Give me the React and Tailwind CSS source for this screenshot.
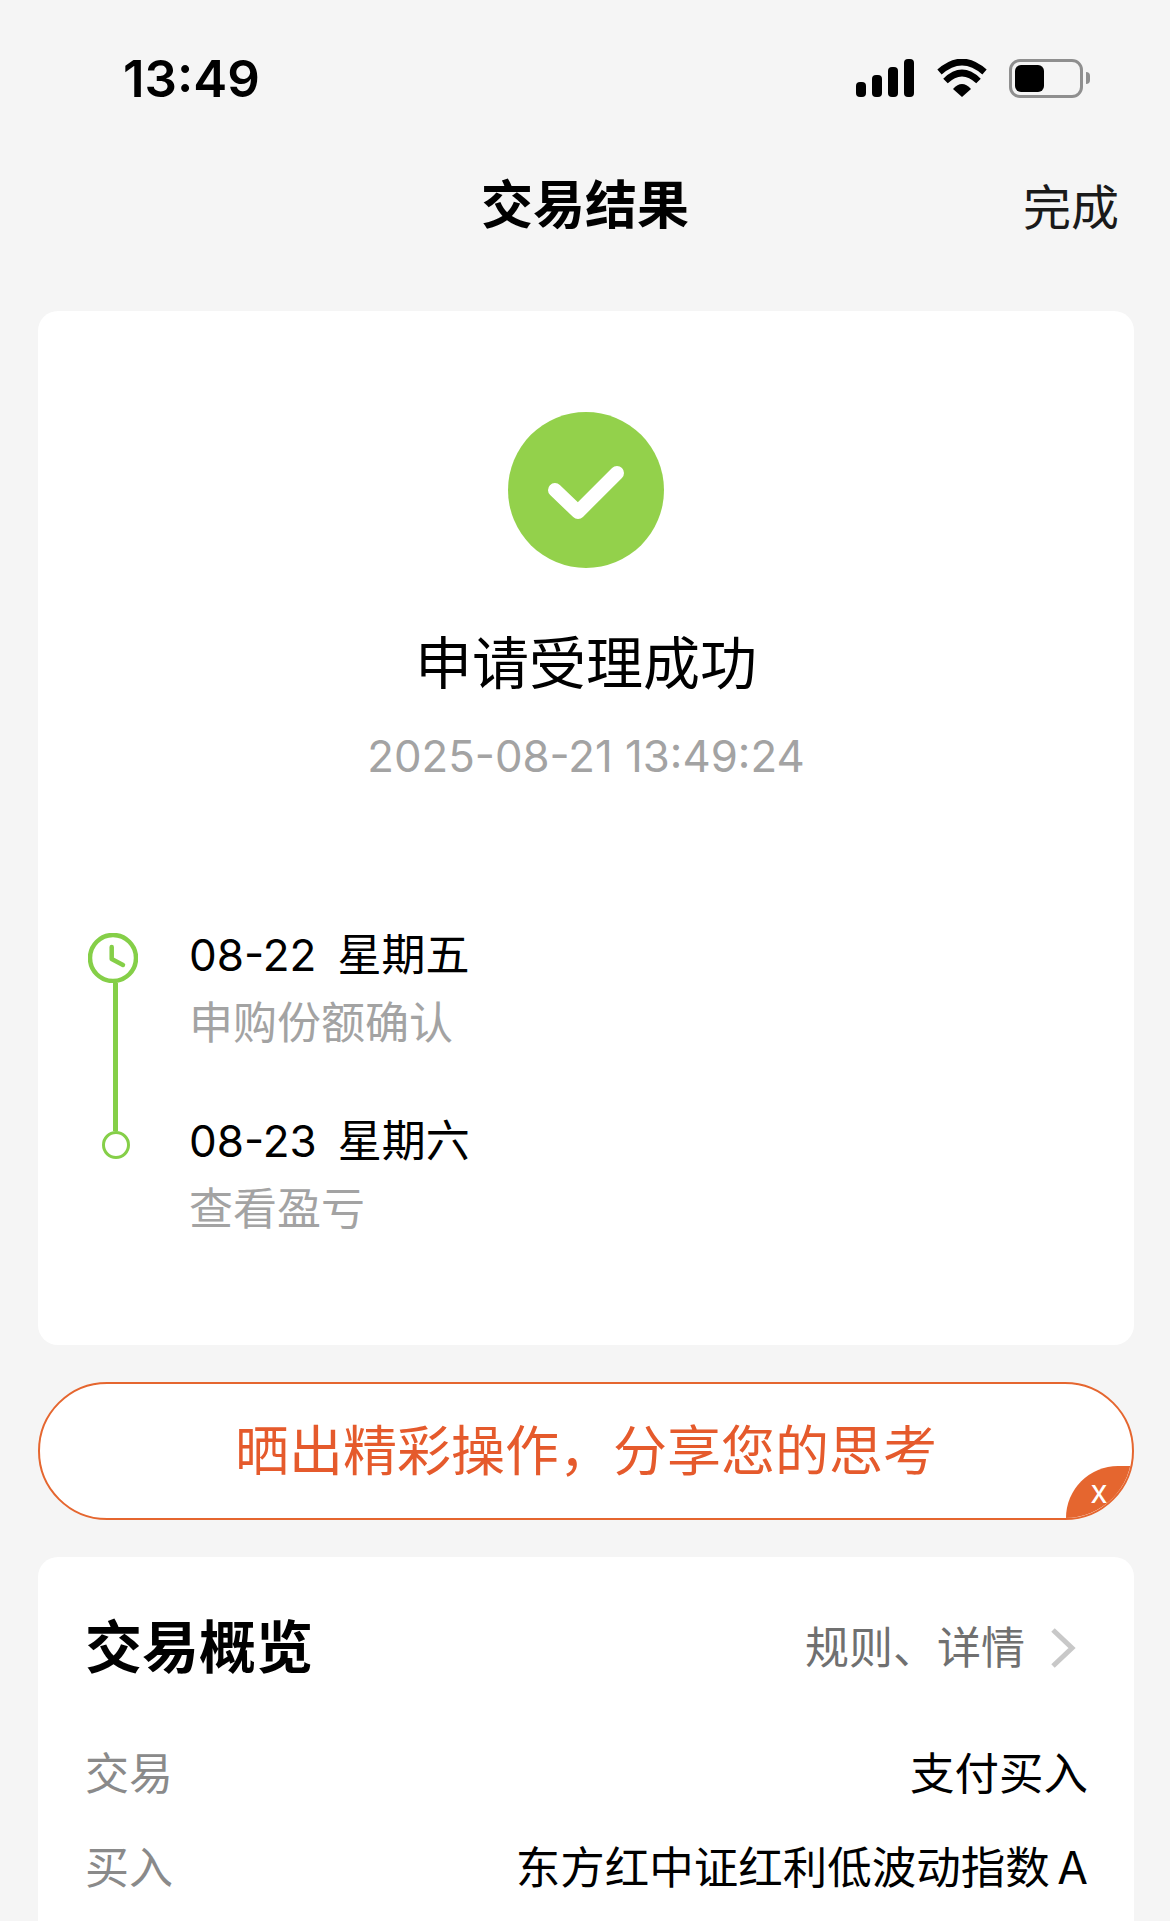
import React from "react";

const FONT = { fontFamily: '"Inter", "Noto Sans CJK SC", sans-serif' };

function StatusIcons() {
  return (
    <div className="flex items-center">
      <svg width="58" height="38" viewBox="0 0 58 38" className="mr-[23px]">
        <rect x="0" y="23" width="10" height="15" rx="4" fill="#000" />
        <rect x="16" y="16" width="10" height="22" rx="4" fill="#000" />
        <rect x="32" y="8" width="10" height="30" rx="4" fill="#000" />
        <rect x="48" y="0" width="10" height="38" rx="4" fill="#000" />
      </svg>
      <svg width="50" height="38" viewBox="0 0 50 38" className="mr-[22px]">
        <path d="M2.5 13 Q25 -7 47.5 13" fill="none" stroke="#000" strokeWidth="6.5" />
        <path d="M8.5 22 Q25 6 41.5 22" fill="none" stroke="#000" strokeWidth="6.5" />
        <path d="M16 30 Q25 20 34 30 L25 38 Z" fill="#000" />
      </svg>
      <div className="flex items-center">
        <div className="w-[74px] h-[39px] rounded-[11px] border-[3px] border-[#8f8f8f] p-[3px]">
          <div className="w-[29px] h-full rounded-[6px] bg-black" />
        </div>
        <div className="w-[4px] h-[12px] ml-[3px] rounded-r-full bg-[#8f8f8f]" />
      </div>
    </div>
  );
}

function TimelineRow({ date, week, note }) {
  return (
    <div className="h-[186px]">
      <div className="flex text-[44px] leading-[68px] text-black">
        <span>{date}</span>
        <span className="ml-[21px]">{week}</span>
      </div>
      <div className="text-[44px] leading-[69px] text-[#a3a3a3]">{note}</div>
    </div>
  );
}

function Timeline() {
  return (
    <div className="flex mt-[134px] pl-[50px]">
      <div className="w-[101px] flex flex-col items-start pt-[12px]">
        <svg width="50" height="50" viewBox="0 0 50 50">
          <circle cx="25" cy="25" r="23" fill="none" stroke="#85cf48" strokeWidth="4.5" />
          <path d="M23.7 14 V26 L35 32" fill="none" stroke="#85cf48" strokeWidth="4.5" strokeLinecap="round" strokeLinejoin="round" />
        </svg>
        <div className="w-[5px] h-[148px] ml-[25px] bg-[#85cf48]" />
        <div className="w-[28px] h-[28px] ml-[14px] rounded-full border-[3.5px] border-[#85cf48]" />
      </div>
      <div>
        <TimelineRow date="08-22" week="星期五" note="申购份额确认" />
        <TimelineRow date="08-23" week="星期六" note="查看盈亏" />
      </div>
    </div>
  );
}

function Detail({ label, value }) {
  return (
    <div className="flex items-center justify-between h-[94px]">
      <span className="text-[44px] text-[#8a8a8a]">{label}</span>
      <span className="text-[44.5px] text-black [word-spacing:-5px]">{value}</span>
    </div>
  );
}

export default function App() {
  return (
    <div className="w-[1170px] h-[1921px] overflow-hidden bg-[#f5f5f5]" style={FONT}>
      <div className="flex items-center justify-between h-[156px] pl-[123px] pr-[80px]">
        <span className="text-[51px] font-semibold text-black translate-y-[1px]">13:49</span>
        <StatusIcons />
      </div>

      <div className="relative h-[155px] flex items-start justify-center pt-[17px]">
        <h1 className="text-[52px] leading-[66px] font-bold text-black">交易结果</h1>
        <span className="absolute right-[51px] top-[19px] text-[48px] leading-[66px] text-[#1a1a1a]">完成</span>
      </div>

      <div className="ml-[38px] mr-[36px] h-[1034px] rounded-[20px] bg-white overflow-hidden">
        <div className="flex flex-col items-center pt-[101px]">
          <div className="w-[156px] h-[156px] rounded-full bg-[#93d14b] flex items-center justify-center">
            <svg width="76" height="56" viewBox="0 0 76 56" className="mt-[6px]">
              <path d="M7 25 L30 47 L69 8" fill="none" stroke="#fff" strokeWidth="14" strokeLinecap="round" strokeLinejoin="round" />
            </svg>
          </div>
          <div className="mt-[56px] text-[57px] leading-[80px] text-black">申请受理成功</div>
          <div className="mt-[23px] text-[43.75px] leading-[60px] text-[#a3a3a3]">2025-08-21 13:49:24</div>
        </div>
        <Timeline />
      </div>

      <div className="relative ml-[38px] mr-[36px] mt-[37px] h-[138px] rounded-full border-2 border-[#e5662f] bg-white overflow-hidden flex items-center justify-center">
        <span className="text-[54px] text-[#e55a2c]">晒出精彩操作，分享您的思考</span>
        <div className="absolute right-0 bottom-0 w-[66px] h-[52px] rounded-tl-[52px] bg-[#e5662f] flex items-center justify-center">
          <span className="text-[32px] leading-none text-white">x</span>
        </div>
      </div>

      <div className="ml-[38px] mr-[36px] mt-[37px] h-[400px] rounded-[20px] bg-white pt-[56px] pl-[47px] pr-[46px]">
        <div className="flex items-center justify-between h-[70px] mb-[44px]">
          <span className="text-[57px] font-bold text-black">交易概览</span>
          <div className="flex items-center">
            <span className="text-[44px] text-[#707070]">规则、详情</span>
            <svg width="28" height="44" viewBox="0 0 28 44" className="ml-[24px] mr-[11px]">
              <path d="M4 4 L23 22 L4 40" fill="none" stroke="#c8c8c8" strokeWidth="5" />
            </svg>
          </div>
        </div>
        <Detail label="交易" value="支付买入" />
        <Detail label="买入" value="东方红中证红利低波动指数 A" />
      </div>
    </div>
  );
}
